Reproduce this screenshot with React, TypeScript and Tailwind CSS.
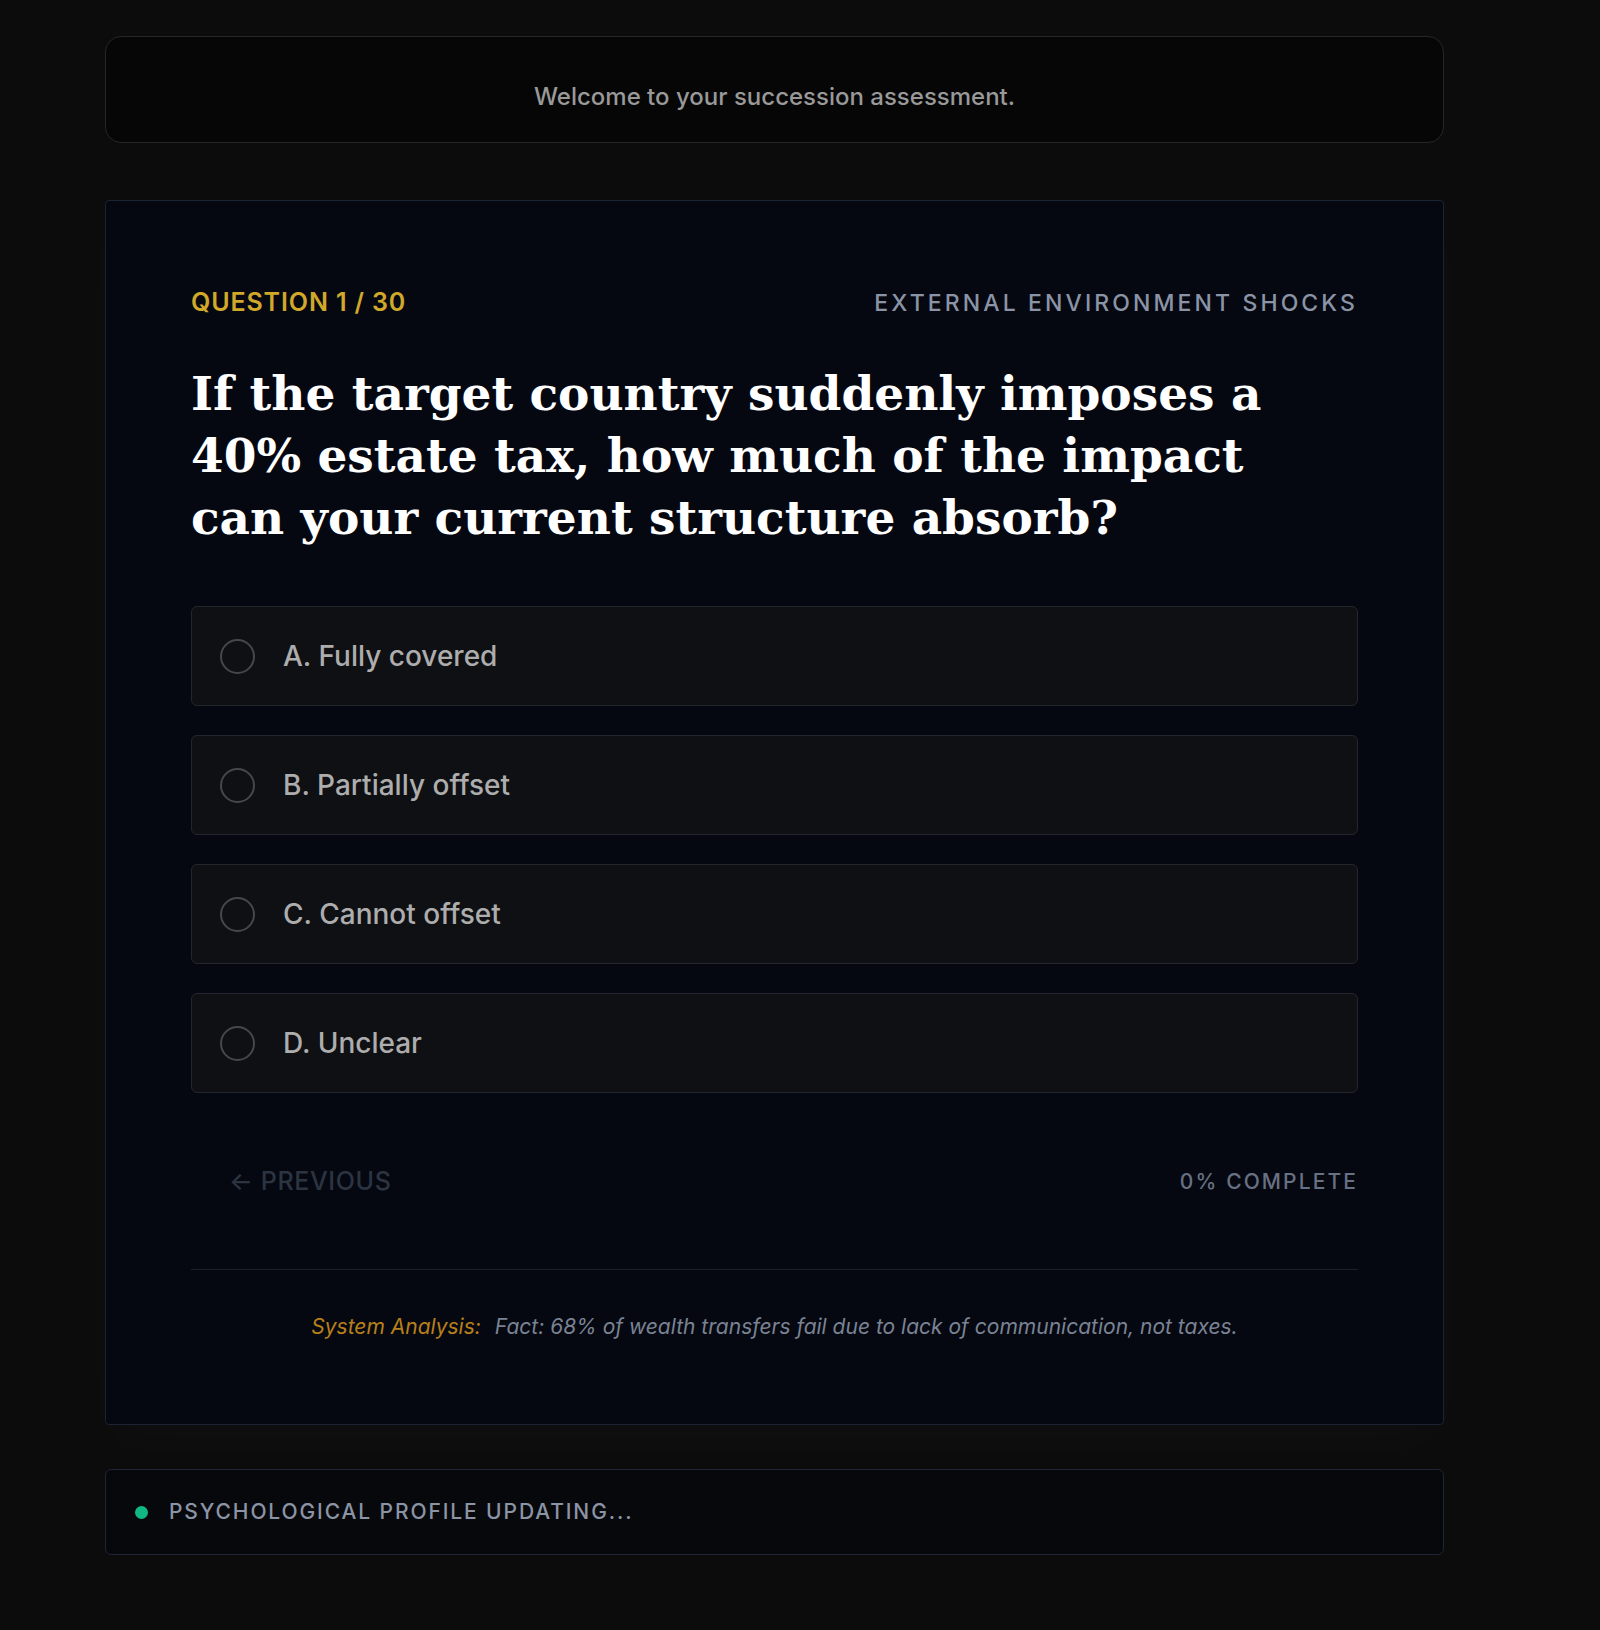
const options = [
  { key: "A", label: "Fully covered" },
  { key: "B", label: "Partially offset" },
  { key: "C", label: "Cannot offset" },
  { key: "D", label: "Unclear" },
];

const sans = "font-['Inter','Liberation_Sans',sans-serif]";

function OptionRow({ letter, label }: { letter: string; label: string }) {
  return (
    <button
      type="button"
      className="flex h-[100px] w-full items-center gap-[28px] rounded-[6px] border border-[#23262c] bg-[#0f1014] pl-[28px] text-left"
    >
      <span className="h-[35px] w-[35px] shrink-0 rounded-full border-2 border-[#45474d]" />
      <span className="text-[28px] font-medium text-[#adadad]">
        {letter}. {label}
      </span>
    </button>
  );
}

export default function App() {
  return (
    <div className={`min-h-[1630px] bg-[#0c0c0c] pt-[36px] ${sans}`}>
      <div className="ml-[105px] flex w-[1339px] flex-col">
        <div className="flex h-[107px] items-center justify-center rounded-[16px] border border-[#262626] bg-[#060606] pt-[14px]">
          <p className="text-[24px] font-medium text-[#999999]">Welcome to your succession assessment.</p>
        </div>

        <div className="mt-[57px] rounded-[4px] border border-[#1b2433] bg-[#050810] px-[85px] pb-[83px] pt-[86px] shadow-[0_20px_60px_rgba(255,255,255,0.02)]">
          <div className="flex h-[32px] items-center justify-between">
            <span className="text-[25px] font-semibold tracking-[0.035em] text-[#d1a82a]">QUESTION 1 / 30</span>
            <span className="text-[23px] font-medium tracking-[0.135em] text-[#8a94a6]">
              EXTERNAL ENVIRONMENT SHOCKS
            </span>
          </div>

          <h1 className="mt-[44px] font-['DejaVu_Serif','Liberation_Serif',serif] text-[47px] font-bold leading-[62px] text-white">
            If the target country suddenly imposes a<br />
            40% estate tax, how much of the impact<br />
            can your current structure absorb?
          </h1>

          <div className="mt-[57px] flex flex-col gap-[29px]">
            {options.map((o) => (
              <OptionRow key={o.key} letter={o.key} label={o.label} />
            ))}
          </div>

          <div className="mt-[74px] flex h-[30px] items-center justify-between">
            <button
              type="button"
              className="pl-[38px] text-[25px] font-medium tracking-wide text-[#2c3442]"
            >
              ← PREVIOUS
            </button>
            <span className="text-[21px] font-medium tracking-[0.1em] text-[#687183]">0% COMPLETE</span>
          </div>

          <div className="mt-[72px] border-t border-[#1a1f2a] pt-[43px] text-center text-[21px] italic leading-[28px]">
            <span className="text-[#b8801a]">System Analysis:</span>
            <span className="ml-[14px] text-[#7a8394]">
              Fact: 68% of wealth transfers fail due to lack of communication, not taxes.
            </span>
          </div>
        </div>

        <div className="mt-[44px] flex h-[86px] items-center gap-[21px] rounded-[6px] border border-[#1e2633] bg-[#07080b] pl-[29px]">
          <span className="h-[13px] w-[13px] rounded-full bg-[#10b981]" />
          <span className="text-[21px] font-medium tracking-[0.09em] text-[#8b94a5]">
            PSYCHOLOGICAL PROFILE UPDATING...
          </span>
        </div>
      </div>
    </div>
  );
}
